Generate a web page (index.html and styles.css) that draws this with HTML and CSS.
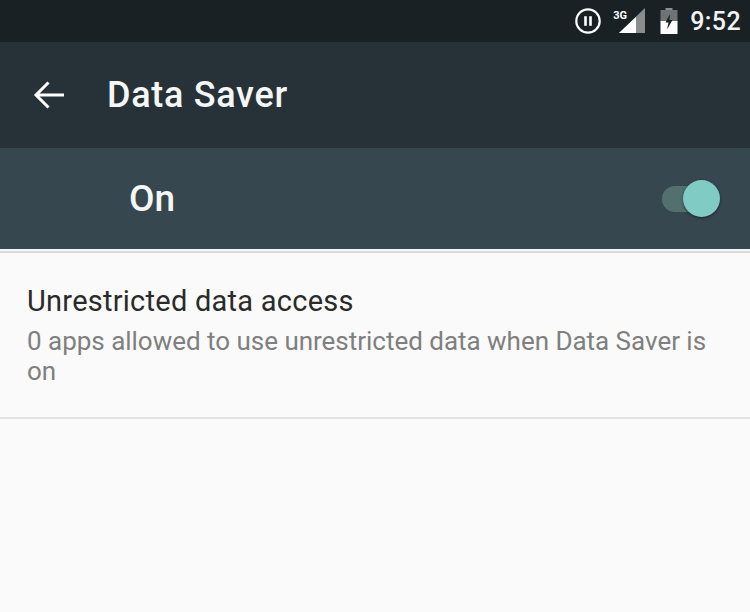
FILE: index.html
```html
<!DOCTYPE html>
<html lang="en">
<head>
    <meta charset="UTF-8">
    <title>Data Saver</title>
    <link rel="stylesheet" href="styles.css">
</head>
<body>
    <div class="statusbar">
        <svg class="icon-pause" width="28" height="28" viewBox="0 0 28 28">
            <circle cx="14" cy="14" r="11.7" fill="none" stroke="#fff" stroke-width="2.2"/>
            <rect x="10.2" y="9.2" width="2.6" height="9.6" fill="#fff"/>
            <rect x="15.2" y="9.2" width="2.6" height="9.6" fill="#fff"/>
        </svg>
        <div class="signal">
            <span class="signal-label">3G</span>
            <svg width="28" height="26" viewBox="0 0 28 26">
                <polygon points="0,25 26,0 26,25" fill="#8a8d8e"/>
                <polygon points="0,25 17,9 17,25" fill="#fff"/>
            </svg>
        </div>
        <svg class="icon-battery" width="18" height="26" viewBox="0 0 18 26">
            <rect x="5.5" y="0" width="7" height="3" fill="#8a8d8e"/>
            <rect x="0.5" y="2" width="17" height="12" fill="#6f7375"/>
            <rect x="0.5" y="13" width="17" height="13" fill="#fff"/>
            <polygon points="10,6 5.5,14.5 8.5,14.5 7,21.5 12.5,12 9.5,12" fill="#1a2226"/>
        </svg>
        <span class="clock">9:52</span>
    </div>
    <div class="toolbar">
        <svg class="icon-back" width="32" height="30" viewBox="0 0 32 30">
            <path d="M31 15H3M15.5 2.5L3 15l12.5 12.5" fill="none" stroke="#fff" stroke-width="3"/>
        </svg>
        <h1 class="title">Data Saver</h1>
    </div>
    <div class="switchbar">
        <span class="switch-label">On</span>
        <div class="switch">
            <div class="switch-track"></div>
            <div class="switch-thumb"></div>
        </div>
    </div>
    <div class="content">
        <div class="pref-item">
            <div class="pref-title">Unrestricted data access</div>
            <div class="pref-summary">0 apps allowed to use unrestricted data when Data Saver is on</div>
        </div>
    </div>
</body>
</html>
```

FILE: styles.css
```css
* {
    margin: 0;
    padding: 0;
    box-sizing: border-box;
}
body {
    width: 750px;
    height: 612px;
    overflow: hidden;
    background: #fafafa;
    font-family: Roboto, sans-serif;
}
.statusbar {
    height: 42px;
    background: #192125;
    display: flex;
    align-items: center;
    justify-content: flex-end;
    padding-right: 9px;
    color: white;
}
.icon-pause {
    margin-right: 11px;
}
.signal {
    position: relative;
    width: 34px;
    height: 26px;
    margin-right: 13px;
    display: flex;
    justify-content: flex-end;
}
.signal-label {
    position: absolute;
    left: 0;
    top: 1px;
    font-size: 11px;
    font-weight: 700;
    line-height: 13px;
}
.icon-battery {
    margin-right: 12px;
}
.clock {
    font-size: 25px;
    font-weight: 500;
    letter-spacing: 0.4px;
    color: #f2f3f3;
}
.toolbar {
    height: 106px;
    background: #263238;
    display: flex;
    align-items: center;
    padding-left: 33px;
}
.icon-back {
    margin-right: 42px;
}
.title {
    font-size: 36px;
    font-weight: 500;
    color: #f5f6f6;
    letter-spacing: 0.7px;
}
.switchbar {
    height: 101px;
    background: #37474f;
    display: flex;
    align-items: center;
    justify-content: space-between;
    padding: 0 30px 0 129px;
}
.switch-label {
    font-size: 37px;
    font-weight: 500;
    color: #f5f6f6;
}
.switch {
    position: relative;
    width: 58px;
    height: 38px;
}
.switch-track {
    position: absolute;
    left: 0;
    top: 6px;
    width: 50px;
    height: 26px;
    border-radius: 13px;
    background: #53706f;
}
.switch-thumb {
    position: absolute;
    right: 0;
    top: 0;
    width: 37px;
    height: 37px;
    border-radius: 50%;
    background: #80cbc4;
    box-shadow: 0 1px 3px rgba(0, 0, 0, 0.5);
}
.content {
    border-top: 2px solid #f6f6f6;
    padding-top: 2px;
    box-shadow: inset 0 2px 0 #d9d9d9;
}
.pref-item {
    padding: 30px 27px 0;
    height: 166px;
    border-bottom: 2px solid #e3e3e3;
}
.pref-title {
    font-size: 29px;
    line-height: 36px;
    letter-spacing: 0.25px;
    color: #2a2a2a;
}
.pref-summary {
    font-size: 26px;
    line-height: 30px;
    letter-spacing: -0.02px;
    color: #7f7f7f;
    margin-top: 7px;
}
```
